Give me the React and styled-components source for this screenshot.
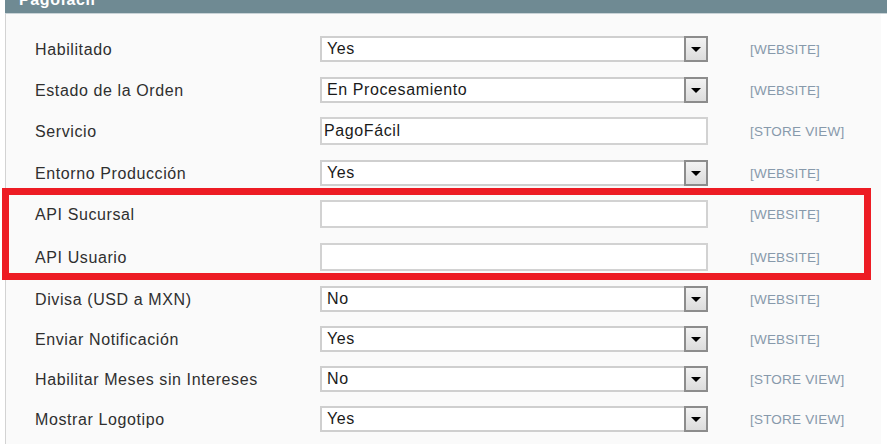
import React from "react";
import styled, { createGlobalStyle } from "styled-components";

const Global = createGlobalStyle`
  html, body { margin: 0; padding: 0; background: #ffffff; }
  body { font-family: "Liberation Sans", Arial, sans-serif; overflow: hidden; }
`;

const Page = styled.div`
  width: 887px;
  height: 444px;
  overflow: hidden;
  padding-left: 5px;
  box-sizing: border-box;
`;

const Header = styled.div`
  height: 30px;
  margin-top: -16px;
  background: #6f8a93;
  border-bottom: 1px solid #c9d3d7;
  color: #ffffff;
  font-weight: bold;
  font-size: 16px;
  letter-spacing: 0.6px;
  line-height: 16px;
  padding: 8px 0 0 14px;
  box-sizing: border-box;
`;

const Panel = styled.div`
  width: 876px;
  background: #fafafa;
  border-left: 1px solid #d3d3d3;
  padding-top: 14px;
  height: 460px;
  box-sizing: border-box;
`;

const Row = styled.div`
  display: grid;
  grid-template-columns: 314px 388px 42px auto;
  align-items: center;
  height: ${(p) => p.h}px;
`;

const Label = styled.div`
  padding: 2px 0 0 29px;
  font-size: 16px;
  letter-spacing: 0.6px;
  color: #2f2f2f;
  white-space: nowrap;
`;

const Select = styled.div`
  grid-column: 2;
  height: 26px;
  box-sizing: border-box;
  border: 2px solid #cfcfcf;
  border-right: none;
  background: #ffffff;
  display: flex;
  align-items: center;
  justify-content: space-between;
  font-size: 16px;
  letter-spacing: 0.6px;
  color: #1a1a1a;
  padding-left: 5px;
`;

const Arrow = styled.div`
  width: 24px;
  height: 26px;
  margin: -2px 0;
  box-sizing: border-box;
  border: 2px solid #8c8c8c;
  background: linear-gradient(#f2f2f2, #dcdcdc);
  display: flex;
  align-items: center;
  justify-content: center;
  padding-top: 2px;
`;

const Input = styled.div`
  grid-column: 2;
  height: 28px;
  box-sizing: border-box;
  border: 2px solid #d2d2d2;
  background: #ffffff;
  display: flex;
  align-items: center;
  font-size: 16px;
  letter-spacing: 0.6px;
  color: #1a1a1a;
  padding-left: 2px;
`;

const Scope = styled.div`
  grid-column: 4;
  padding-top: 1px;
  font-size: 13.5px;
  letter-spacing: 0.2px;
  color: #8799ab;
  white-space: nowrap;
`;

const Highlight = styled.div`
  position: relative;
  &::after {
    content: "";
    position: absolute;
    top: -5px;
    bottom: -2px;
    left: -4px;
    right: 10px;
    border: 7px solid #ed1c24;
    pointer-events: none;
  }
`;

const Triangle = () => (
  <svg width="10" height="6" viewBox="0 0 10 6">
    <polygon points="0,0 10,0 5,5" fill="#000" />
  </svg>
);

const rows = [
  { label: "Habilitado", type: "select", value: "Yes", scope: "[WEBSITE]", h: 41 },
  { label: "Estado de la Orden", type: "select", value: "En Procesamiento", scope: "[WEBSITE]", h: 41 },
  { label: "Servicio", type: "input", value: "PagoFácil", scope: "[STORE VIEW]", h: 42 },
  { label: "Entorno Producción", type: "select", value: "Yes", scope: "[WEBSITE]", h: 41 },
  { label: "API Sucursal", type: "input", value: "", scope: "[WEBSITE]", h: 42, hl: true },
  { label: "API Usuario", type: "input", value: "", scope: "[WEBSITE]", h: 43, hl: true },
  { label: "Divisa (USD a MXN)", type: "select", value: "No", scope: "[WEBSITE]", h: 41 },
  { label: "Enviar Notificación", type: "select", value: "Yes", scope: "[WEBSITE]", h: 40 },
  { label: "Habilitar Meses sin Intereses", type: "select", value: "No", scope: "[STORE VIEW]", h: 40 },
  { label: "Mostrar Logotipo", type: "select", value: "Yes", scope: "[STORE VIEW]", h: 40 },
];

const FieldRow = ({ r }) => (
  <Row h={r.h}>
    <Label>{r.label}</Label>
    {r.type === "select" ? (
      <Select>
        <span>{r.value}</span>
        <Arrow>
          <Triangle />
        </Arrow>
      </Select>
    ) : (
      <Input>{r.value}</Input>
    )}
    <Scope>{r.scope}</Scope>
  </Row>
);

export default function App() {
  const before = rows.slice(0, 4);
  const hl = rows.slice(4, 6);
  const after = rows.slice(6);
  return (
    <Page>
      <Global />
      <Header>Pagofácil</Header>
      <Panel>
        {before.map((r) => (
          <FieldRow key={r.label} r={r} />
        ))}
        <Highlight>
          {hl.map((r) => (
            <FieldRow key={r.label} r={r} />
          ))}
        </Highlight>
        {after.map((r) => (
          <FieldRow key={r.label} r={r} />
        ))}
      </Panel>
    </Page>
  );
}
